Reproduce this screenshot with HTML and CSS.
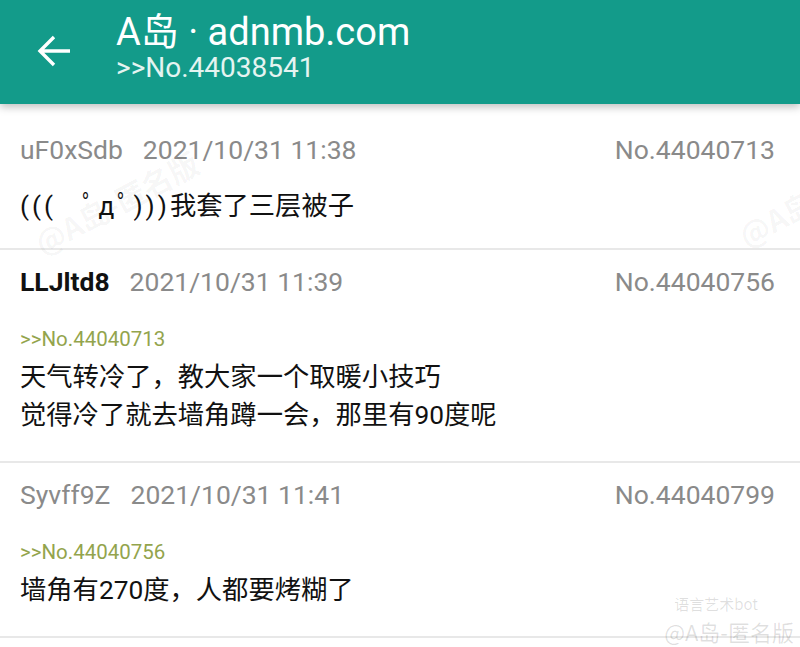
FILE: index.html
```html
<!DOCTYPE html>
<html lang="zh-CN">
<head>
  <meta charset="UTF-8">
  <title>A岛 · adnmb.com</title>
  <meta name="viewport" content="width=device-width, initial-scale=1.0">
  <link rel="stylesheet" href="styles.css">
</head>
<body>

  <div class="toolbar">
    <svg class="back" viewBox="0 0 24 24" width="48" height="48">
      <path d="M20 12H5.5M12 5l-7 7 7 7" fill="none" stroke="#fff" stroke-width="1.7"/>
    </svg>
    <div class="titles">
      <div class="title">A岛 · adnmb.com</div>
      <div class="subtitle">&gt;&gt;No.44038541</div>
    </div>
  </div>

  <div class="list">
    <div class="post first-post">
      <div class="meta">
        <span class="uid">uF0xSdb</span>
        <span class="time">2021/10/31 11:38</span>
        <span class="no">No.44040713</span>
      </div>
      <div class="content first"><span class="kao">(((　ﾟдﾟ)))</span>我套了三层被子</div>
    </div>

    <div class="post">
      <div class="meta">
        <span class="uid po">LLJltd8</span>
        <span class="time">2021/10/31 11:39</span>
        <span class="no">No.44040756</span>
      </div>
      <div class="quote">&gt;&gt;No.44040713</div>
      <div class="content">天气转冷了，教大家一个取暖小技巧<br>觉得冷了就去墙角蹲一会，那里有90度呢</div>
    </div>

    <div class="post">
      <div class="meta">
        <span class="uid">Syvff9Z</span>
        <span class="time">2021/10/31 11:41</span>
        <span class="no">No.44040799</span>
      </div>
      <div class="quote">&gt;&gt;No.44040756</div>
      <div class="content">墙角有270度，人都要烤糊了</div>
    </div>
  </div>

  <!-- watermarks over the screenshot -->
  <div class="mark mark-a">@A岛-匿名版</div>
  <div class="mark mark-b">@A岛</div>
  <div class="weibo">
    <div class="weibo-top">语言艺术bot</div>
    <div class="weibo-name">@A岛-匿名版</div>
  </div>

</body>
</html>
```

FILE: styles.css
```css
body {
  margin: 0;
  background: #fff;
  font-family: Roboto, "Noto Sans CJK SC", sans-serif;
  overflow: hidden;
  position: relative;
  height: 647px;
}

.toolbar {
  height: 104px;
  background: #139b8a;
  display: flex;
  align-items: center;
  box-shadow: 0 3px 8px rgba(0,0,0,0.25);
  position: relative;
  z-index: 1;
}

.back {
  margin-left: 30px;
  margin-top: -2px;
  flex: none;
}

.titles {
  align-self: flex-start;
  margin-left: 38px;
  padding-top: 10px;
  color: #fff;
}

.title {
  font-size: 38px;
  line-height: 44px;
}

.subtitle {
  font-size: 28px;
  line-height: 28px;
  color: #e4f4f1;
}

.list {
  padding-top: 14px;
}

.post {
  padding: 16px 25px 27px 20px;
  border-bottom: 2px solid #e8e8e8;
}

.post.first-post {
  padding-bottom: 23px;
}

.meta {
  display: flex;
  font-size: 26.5px;
  line-height: 32px;
  color: #8a8a8a;
}

.uid {
  margin-right: 20px;
}

.uid.po {
  color: #111;
  font-weight: bold;
}

.no {
  margin-left: auto;
}

.quote {
  margin-top: 27px;
  font-size: 20.5px;
  line-height: 28px;
  color: #93a44c;
}

.content {
  margin-top: 5px;
  font-size: 26.3px;
  line-height: 38px;
  color: #111;
}

.content.first {
  margin-top: 21px;
}

.kao {
  letter-spacing: 3px;
}

.mark {
  position: absolute;
  font-family: "Noto Sans CJK SC", sans-serif;
  font-weight: bold;
  font-size: 30px;
  color: rgba(0,0,0,0.045);
  transform: rotate(-28deg);
  white-space: nowrap;
}

.mark-a {
  left: 26px;
  top: 180px;
}

.mark-b {
  left: 736px;
  top: 196px;
}

.weibo {
  position: absolute;
  right: 6px;
  bottom: 0;
  font-family: "Noto Sans CJK SC", sans-serif;
  color: rgba(0,0,0,0.13);
  text-align: right;
}

.weibo-top {
  font-size: 15px;
  line-height: 22px;
  margin-right: 36px;
}

.weibo-name {
  font-size: 22px;
  line-height: 32px;
}
```
